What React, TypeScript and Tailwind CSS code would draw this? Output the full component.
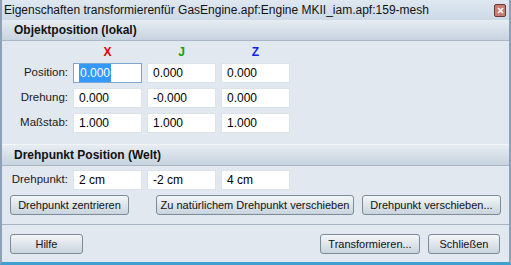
const font = { fontFamily: '"Liberation Sans", Arial, sans-serif' };

function Field({ value, focused }: { value: string; focused?: boolean }) {
  return (
    <div
      className={`flex h-[20px] w-[69px] items-center border bg-white pl-[5px] text-[12px] text-black ${
        focused ? 'border-[#7ea6d3]' : 'border-[#dbe2ea]'
      }`}
    >
      {focused ? (
        <span className="bg-[#3399ff] px-px text-white">{value}</span>
      ) : (
        <span>{value}</span>
      )}
    </div>
  );
}

function Row({ label, values, focusFirst }: { label: string; values: string[]; focusFirst?: boolean }) {
  return (
    <div className="flex h-[20px] items-center">
      <div className="w-[66px] text-right text-[11.5px] text-[#1a1a1a]">{label}</div>
      <div className="ml-[5px] flex gap-[5px]">
        {values.map((v, i) => (
          <Field key={i} value={v} focused={focusFirst && i === 0} />
        ))}
      </div>
    </div>
  );
}

function Btn({ children, w }: { children: string; w: string }) {
  return (
    <button
      className={`flex h-[20px] ${w} items-center justify-center whitespace-nowrap rounded-[3px] border border-[#7d8b99] bg-gradient-to-b from-[#f4f6f8] to-[#c9d4de] text-[11px] text-[#111]`}
    >
      {children}
    </button>
  );
}

function SectionHead({ title }: { title: string }) {
  return (
    <div className="flex h-[21px] items-center border-b border-[#aab6c3] bg-gradient-to-b from-[#e6ecf2] to-[#c7d3df] pl-[12px] text-[12px] font-bold text-[#111]">
      {title}
    </div>
  );
}

export default function App() {
  return (
    <div
      className="flex h-[265px] w-[511px] flex-col border-x-[2px] border-b-[3px] border-x-[#8da1b6] border-b-[#3f9fd0] bg-[#e2e8ef]"
      style={font}
    >
      <div className="flex h-[20px] items-center justify-between bg-gradient-to-b from-[#dfe8f1] to-[#ccd9e6] pl-[2px] pr-[3px]">
        <span className="text-[12px] text-[#111]">
          Eigenschaften transformierenfür GasEngine.apf:Engine MKII_iam.apf:159-mesh
        </span>
        <span className="flex h-[13px] w-[12px] items-center justify-center rounded-[2px] border border-[#6b3a34] bg-[#c97d72]">
          <svg width="7" height="7" viewBox="0 0 7 7">
            <path d="M1 1 L6 6 M6 1 L1 6" stroke="white" strokeWidth="1.6" />
          </svg>
        </span>
      </div>

      <SectionHead title="Objektposition (lokal)" />

      <div className="ml-[71px] mt-[6px] flex h-[11px] gap-[5px] text-[12px] font-bold leading-[11px]">
        <span className="w-[69px] text-center text-[#e00000]">X</span>
        <span className="w-[69px] text-center text-[#10a010]">J</span>
        <span className="w-[69px] text-center text-[#1020f0]">Z</span>
      </div>

      <div className="mt-[5px] flex flex-col gap-[5px]">
        <Row label="Position:" values={['0.000', '0.000', '0.000']} focusFirst />
        <Row label="Drehung:" values={['0.000', '-0.000', '0.000']} />
        <Row label="Maßstab:" values={['1.000', '1.000', '1.000']} />
      </div>

      <div className="mt-[11px] border-t border-[#f2f5f8]">
        <SectionHead title="Drehpunkt Position (Welt)" />
      </div>

      <div className="mt-[4px]">
        <Row label="Drehpunkt:" values={['2 cm', '-2 cm', '4 cm']} />
      </div>

      <div className="ml-[8px] mt-[5px] flex">
        <Btn w="w-[119px]">Drehpunkt zentrieren</Btn>
        <div className="ml-[27px]">
          <Btn w="w-[198px]">Zu natürlichem Drehpunkt verschieben</Btn>
        </div>
        <div className="ml-[8px]">
          <Btn w="w-[139px]">Drehpunkt verschieben...</Btn>
        </div>
      </div>

      <div className="mt-[9px] border-t border-[#a9b5c2]" />

      <div className="ml-[8px] mt-[9px] flex">
        <Btn w="w-[73px]">Hilfe</Btn>
        <div className="ml-auto mr-[9px] flex gap-[8px]">
          <Btn w="w-[100px]">Transformieren...</Btn>
          <Btn w="w-[72px]">Schließen</Btn>
        </div>
      </div>
    </div>
  );
}
